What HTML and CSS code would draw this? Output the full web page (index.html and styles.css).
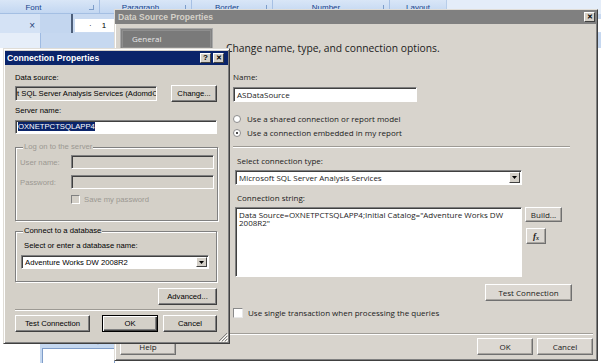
FILE: index.html
```html
<!DOCTYPE html>
<html lang="en">
  <head>
    <meta charset="UTF-8" />
    <title>Data Source Properties</title>
    <link rel="stylesheet" href="styles.css">
  </head>
  <body>
    <div class="screen">
      <!-- Excel behind the dialogs -->
      <div class="excel">
        <div class="ribbon-row">
          <div class="ribbon">
            <div class="rgroup g-font">Font<i class="launcher"></i></div>
            <div class="rgroup g-para">Paragraph<i class="launcher"></i></div>
            <div class="rgroup g-border">Border<i class="launcher"></i></div>
            <div class="rgroup g-number">Number<i class="launcher"></i></div>
            <div class="rgroup g-layout">Layout</div>
          </div>
          <div class="ribbon-rest"></div>
        </div>
        <div class="formula">
          <div class="name-box"><span class="cancel-x">×</span></div>
          <div class="fx-area"></div>
          <div class="cell-area"><div class="cell"><span>·</span><span>1</span></div></div>
        </div>
        <div class="band">
          <div class="band-left"></div>
          <div class="band-right"></div>
        </div>
        <div class="sheet">
          <div class="sheet-left"></div>
          <div class="pane">
            <div class="pane-row"><span class="pane-check"></span>New Group</div>
            <div class="pane-box"></div>
          </div>
          <div class="sheet-rest"></div>
        </div>
      </div>

      <!-- Data Source Properties -->
      <div class="window dsp">
        <div class="titlebar inactive">
          <span class="title">Data Source Properties</span>
          <span class="cap-btn">✕</span>
        </div>
        <div class="dsp-body">
          <div class="dsp-side">
            <div class="nav">
              <div class="nav-item">General</div>
            </div>
            <button class="btn help-btn">Help</button>
          </div>
          <div class="dsp-main">
            <div class="dsp-heading">Change name, type, and connection options.</div>
            <div class="dsp-form">
              <div class="lbl first">Name:</div>
              <div class="field name-field">ASDataSource</div>
              <div class="opt opt-1"><span class="radio"></span>Use a shared connection or report model</div>
              <div class="opt opt-2"><span class="radio on"></span>Use a connection embedded in my report</div>
              <div class="sep form-sep"></div>
              <div class="lbl indent">Select connection type:</div>
              <div class="field combo type-combo">
                <span class="combo-text">Microsoft SQL Server Analysis Services</span>
                <span class="drop"><svg width="5" height="3" viewBox="0 0 5 3"><path d="M0 0h5L2.5 3z" fill="#000"/></svg></span>
              </div>
              <div class="lbl indent">Connection string:</div>
              <div class="conn-row">
                <div class="field conn-text">Data Source=OXNETPCTSQLAPP4;Initial Catalog="Adventure Works DW 2008R2"</div>
                <div class="conn-side">
                  <button class="btn build-btn">Build...</button>
                  <button class="btn fx-btn"><b>f</b><small>x</small></button>
                </div>
              </div>
              <button class="btn test-btn">Test Connection</button>
              <div class="opt check-row"><span class="check"></span>Use single transaction when processing the queries</div>
            </div>
            <div class="dsp-footer">
              <button class="btn">OK</button>
              <button class="btn">Cancel</button>
            </div>
          </div>
        </div>
      </div>

      <!-- Connection Properties -->
      <div class="window cp">
        <div class="titlebar active">
          <span class="title">Connection Properties</span>
          <span class="cap-btn q">?</span>
          <span class="cap-btn">✕</span>
        </div>
        <div class="cp-body">
          <div class="cp-lbl first">Data source:</div>
          <div class="cp-source">
            <div class="field ro">t SQL Server Analysis Services (AdomdC</div>
            <button class="btn change-btn">Change...</button>
          </div>
          <div class="cp-lbl">Server name:</div>
          <div class="field server-field"><span class="selected">OXNETPCTSQLAPP4</span></div>

          <fieldset class="group logon">
            <legend>Log on to the server</legend>
            <div class="cred"><span class="cred-lbl">User name:</span><span class="field cred-field"></span></div>
            <div class="cred pw"><span class="cred-lbl">Password:</span><span class="field cred-field"></span></div>
            <div class="save"><span class="check off"></span>Save my password</div>
          </fieldset>

          <fieldset class="group db">
            <legend>Connect to a database</legend>
            <div class="db-lbl">Select or enter a database name:</div>
            <div class="field combo db-combo">
              <span class="combo-text">Adventure Works DW 2008R2</span>
              <span class="drop"><svg width="5" height="3" viewBox="0 0 5 3"><path d="M0 0h5L2.5 3z" fill="#000"/></svg></span>
            </div>
          </fieldset>

          <div class="adv-row"><button class="btn adv-btn">Advanced...</button></div>
          <div class="sep cp-sep"></div>
          <div class="cp-buttons">
            <button class="btn tc-btn">Test Connection</button>
            <button class="btn default ok-btn">OK</button>
            <button class="btn cancel-btn">Cancel</button>
          </div>
          <svg class="grip" width="10" height="10" viewBox="0 0 10 10">
            <path d="M9 1L1 9M9 4L4 9M9 7L7 9" stroke="#808080" stroke-width="1"/>
            <path d="M10 2L2 10M10 5L5 10M10 8L8 10" stroke="#fff" stroke-width="1"/>
          </svg>
        </div>
      </div>
    </div>
  </body>
</html>
```

FILE: styles.css
```css
body {
  margin: 0;
  background: #fff;
}
.screen {
  position: relative;
  width: 601px;
  height: 363px;
  overflow: hidden;
  background: #fff;
}
button {
  font: inherit;
  color: inherit;
  padding: 0;
  margin: 0;
}

/* ---------- excel backdrop ---------- */
.excel {
  position: absolute;
  inset: 0;
  display: flex;
  flex-direction: column;
  font-family: "Liberation Sans", Arial, sans-serif;
}
.ribbon-row {
  display: flex;
  height: 14px;
}
.ribbon {
  display: flex;
  width: 447px;
  background: linear-gradient(#d9e6f7, #c3d7f1);
  border-bottom: 1px solid #a4bfe3;
  box-sizing: border-box;
}
.ribbon-rest {
  flex: 1;
  background: #e4edf9;
}
.rgroup {
  position: relative;
  display: flex;
  justify-content: center;
  box-sizing: border-box;
  padding: 2px 10px 0 0;
  border-right: 1px solid #a6c0e4;
  font-size: 8px;
  line-height: 12px;
  color: #15428b;
}
.g-font { width: 132px; margin-left: -32px; padding-right: 0; }
.g-para { width: 92px; }
.g-border { width: 81px; }
.g-number { width: 117px; }
.g-layout { width: 57px; padding-right: 0; border-right-color: #b7cde9; }
.launcher {
  position: absolute;
  right: 5px;
  top: 5px;
  width: 4px;
  height: 4px;
  border-right: 1px solid #7d9dc9;
  border-bottom: 1px solid #7d9dc9;
}
.formula {
  display: flex;
  height: 19px;
}
.name-box {
  width: 40px;
  background: #d4e2f5;
  display: flex;
  justify-content: flex-end;
  align-items: center;
  padding: 3px 5px 0 0;
  box-sizing: border-box;
}
.cancel-x {
  font-size: 10px;
  color: #1f3f78;
}
.fx-area {
  width: 31px;
  background: #c3d6ef;
  border-right: 2px solid #4d5f7a;
}
.cell-area {
  flex: 1;
  background: #c9daf1;
  padding: 5px 0 1px 2px;
}
.cell {
  height: 13px;
  background: #fff;
  display: flex;
  gap: 10px;
  padding-left: 14px;
  font-size: 8px;
  line-height: 13px;
}
.band {
  display: flex;
  height: 15px;
}
.band-left {
  width: 40px;
  background: #e6eef9;
  border-right: 1px solid #9fbbe2;
}
.band-right {
  flex: 1;
  background: #c6d8f0;
}
.sheet {
  flex: 1;
  display: flex;
}
.sheet-left {
  width: 40px;
  background: #fff;
}
.pane {
  width: 75px;
  background: #c5d8f0;
  display: flex;
  flex-direction: column;
  justify-content: flex-end;
  padding-left: 2px;
  box-sizing: border-box;
}
.pane-row {
  display: flex;
  align-items: center;
  gap: 8px;
  height: 10px;
  margin-bottom: 3px;
  font-size: 8px;
  color: #9fb5d6;
}
.pane-check {
  width: 6px;
  height: 6px;
  border: 1px solid #8aa2c6;
  margin-left: 3px;
}
.pane-box {
  height: 14px;
  background: #fff;
  border: 1px solid #7f9dc9;
  border-bottom: 0;
}
.sheet-rest {
  flex: 1;
}

/* ---------- shared window chrome ---------- */
.window {
  position: absolute;
  box-sizing: border-box;
  display: flex;
  flex-direction: column;
  border: 1px solid;
  border-color: #e0ddd7 #404040 #404040 #e0ddd7;
  box-shadow: inset 1px 1px #fff, inset -1px -1px #808080;
}
.titlebar {
  display: flex;
  align-items: center;
  height: 14px;
  flex-shrink: 0;
  font-family: "Liberation Sans", Arial, sans-serif;
  font-weight: bold;
  font-size: 8.6px;
}
.titlebar .title {
  flex: 1;
  padding-left: 3px;
}
.titlebar.active {
  background: #0a246a;
  color: #fff;
}
.titlebar.inactive {
  background: #808080;
  color: #d4d0c8;
}
.cap-btn {
  width: 11px;
  height: 10px;
  box-sizing: border-box;
  margin-left: 2px;
  background: #d4d0c8;
  border: 1px solid;
  border-color: #fff #404040 #404040 #fff;
  color: #000;
  font-size: 7px;
  line-height: 8px;
  text-align: center;
}
.btn {
  box-sizing: border-box;
  height: 17px;
  background: #d4d0c8;
  border: 1px solid;
  border-color: #fff #404040 #404040 #fff;
  box-shadow: inset -1px -1px #808080;
  display: flex;
  align-items: center;
  justify-content: center;
  white-space: nowrap;
}
.btn.default {
  border-color: #000;
  box-shadow: inset 1px 1px #fff, inset -1px -1px #404040, inset -2px -2px #808080;
}
.field {
  box-sizing: border-box;
  background: #fff;
  border: 1px solid;
  border-color: #808080 #fff #fff #808080;
  box-shadow: inset 1px 1px #404040;
  white-space: nowrap;
  overflow: hidden;
}
.sep {
  height: 0;
  border-top: 1px solid #9d9a94;
  border-bottom: 1px solid #fff;
}
.combo {
  display: flex;
  align-items: center;
}
.combo-text {
  flex: 1;
  padding-left: 3px;
}
.drop {
  width: 11px;
  align-self: stretch;
  margin: 1px;
  box-sizing: border-box;
  background: #d4d0c8;
  border: 1px solid;
  border-color: #fff #404040 #404040 #fff;
  display: flex;
  align-items: center;
  justify-content: center;
}

/* ---------- data source properties ---------- */
.dsp {
  left: 114px;
  top: 9px;
  width: 484px;
  height: 352px;
  background: #d8d4cd;
  font-family: "Open Sans", sans-serif;
  font-size: 8px;
  color: #1b1b1b;
}
.dsp .cap-btn {
  margin-right: 2px;
}
.dsp .btn {
  background: #dcd8d2;
  border-color: #fff #707070 #707070 #fff;
  box-shadow: inset -1px -1px #a8a5a0;
}
.dsp-body {
  flex: 1;
  display: flex;
  padding: 4px 4px 5px 5px;
}
.dsp-side {
  width: 93px;
  display: flex;
  flex-direction: column;
}
.nav {
  flex: 1;
  background: #828282;
  border: 1px solid #a9a9a9;
  padding: 1px;
}
.nav-item {
  height: 16px;
  line-height: 16px;
  padding-left: 9px;
  background: #7a7a7a;
  border: 1px solid #8e8e8e;
  color: #e6e6e6;
}
.help-btn {
  width: 56px;
  height: 18px;
  margin-top: 4px;
}
.dsp-main {
  flex: 1;
  margin-left: 13px;
  display: flex;
  flex-direction: column;
}
.dsp-heading {
  margin-top: 12px;
  font-size: 10.3px;
  line-height: 16px;
}
.dsp-form {
  width: 339px;
  padding-left: 7px;
  display: flex;
  flex-direction: column;
  align-items: flex-start;
}
.lbl {
  line-height: 10px;
  margin-top: 8px;
}
.lbl.first {
  margin-top: 16px;
}
.lbl.indent {
  margin-left: 4px;
}
.name-field {
  width: 184px;
  height: 15px;
  margin-top: 5px;
  padding-left: 3px;
  line-height: 13px;
}
.opt {
  display: flex;
  align-items: center;
  line-height: 10px;
}
.opt-1 {
  margin-top: 12px;
}
.opt-2 {
  margin-top: 4px;
}
.radio {
  position: relative;
  width: 8px;
  height: 8px;
  box-sizing: border-box;
  border-radius: 50%;
  background: #fff;
  border: 1px solid #8c8c8c;
  margin-right: 6px;
}
.radio.on::after {
  content: "";
  position: absolute;
  left: 2px;
  top: 2px;
  width: 2px;
  height: 2px;
  border-radius: 50%;
  background: #111;
}
.form-sep {
  width: 337px;
  margin-top: 8px;
}
.type-combo {
  width: 287px;
  height: 15px;
  margin: 4px 0 0 2px;
}
.conn-row {
  display: flex;
  margin: 4px 0 0 2px;
}
.conn-text {
  width: 287px;
  height: 70px;
  padding: 3px 3px;
  white-space: normal;
  line-height: 8px;
}
.conn-side {
  display: flex;
  flex-direction: column;
  align-items: flex-start;
  margin-left: 3px;
}
.build-btn {
  width: 37px;
  height: 15px;
}
.fx-btn {
  width: 20px;
  height: 16px;
  margin: 6px 0 0 1px;
  font-family: "Liberation Serif", serif;
  font-style: italic;
  font-size: 9px;
}
.fx-btn small {
  font-size: 6px;
  font-weight: bold;
  margin-top: 3px;
}
.test-btn {
  width: 87px;
  margin: 7px 0 0 auto;
}
.check-row {
  margin-top: 7px;
}
.check {
  width: 10px;
  height: 10px;
  box-sizing: border-box;
  background: #fff;
  border: 1px solid;
  border-color: #8a8a8a #e8e8e8 #e8e8e8 #8a8a8a;
  margin-right: 5px;
}
.dsp-footer {
  margin-top: auto;
  display: flex;
  justify-content: flex-end;
  gap: 4px;
  padding-top: 4px;
  border-top: 1px solid #a19e98;
  box-shadow: inset 0 1px #fff;
}
.dsp-footer .btn {
  width: 56px;
}

/* ---------- connection properties ---------- */
.cp {
  left: 3px;
  top: 48px;
  width: 227px;
  height: 296px;
  padding: 1px;
  background: #d4d0c8;
  font-family: "Liberation Sans", Arial, sans-serif;
  font-size: 7.7px;
  color: #000;
}
.cp .titlebar {
  margin-top: 1px;
}
.cp .titlebar .title {
  padding-left: 2px;
}
.cp .titlebar .cap-btn:last-child {
  margin-right: 4px;
}
.cp .q {
  font-weight: bold;
  font-size: 8px;
}
.cp-body {
  position: relative;
  flex: 1;
  display: flex;
  flex-direction: column;
  padding: 0 10px;
}
.cp-lbl {
  line-height: 10px;
  margin-top: 4px;
}
.cp-lbl.first {
  margin-top: 8px;
}
.cp-source {
  display: flex;
  align-items: center;
  height: 17px;
  margin-top: 2px;
}
.field.ro {
  width: 142px;
  height: 15px;
  background: #d4d0c8;
  line-height: 13px;
  padding-left: 1px;
}
.change-btn {
  width: 46px;
  margin-left: auto;
  margin-right: 1px;
}
.server-field {
  width: 202px;
  height: 14px;
  margin-top: 4px;
  padding: 1px 0 0 2px;
  line-height: 10px;
}
.selected {
  background: #0a246a;
  color: #fff;
}
.group {
  margin: 0;
  padding: 0 3px 0 4px;
  border: 1px solid #808080;
  box-shadow: inset 1px 1px #fff, 1px 1px #fff;
  width: 202px;
  box-sizing: border-box;
}
.group legend {
  padding: 0 1px;
  margin-left: 3px;
  line-height: 10px;
  background: #d4d0c8;
}
.logon {
  margin-top: 8px;
  padding-bottom: 16px;
  color: #9b9892;
}
.logon legend {
  color: #9b9892;
}
.cred {
  display: flex;
  align-items: center;
  margin-top: 3px;
}
.cred.pw {
  margin-top: 6px;
}
.cred-lbl {
  width: 51px;
}
.cred-field {
  width: 143px;
  height: 14px;
  background: #d4d0c8;
}
.save {
  display: flex;
  align-items: center;
  height: 9px;
  margin-top: 6px;
  padding-left: 51px;
}
.check.off {
  width: 9px;
  height: 9px;
  margin-right: 4px;
  background: #d4d0c8;
  border-color: #808080 #fff #fff #808080;
}
.db {
  margin-top: 5px;
  padding-bottom: 12px;
}
.db-lbl {
  margin: 5px 0 0 4px;
  line-height: 10px;
}
.db-combo {
  width: 188px;
  height: 14px;
  margin: 4px 0 0 1px;
}
.adv-row {
  display: flex;
  justify-content: flex-end;
  margin-top: 6px;
}
.adv-btn {
  width: 59px;
  margin-right: 1px;
}
.cp-sep {
  margin-top: 4px;
}
.cp-buttons {
  display: flex;
  margin-top: 4px;
}
.tc-btn {
  width: 75px;
}
.ok-btn {
  width: 56px;
  margin-left: 12px;
}
.cancel-btn {
  width: 54px;
  margin-left: auto;
  margin-right: 1px;
}
.grip {
  position: absolute;
  right: 0;
  bottom: 0;
}
```
